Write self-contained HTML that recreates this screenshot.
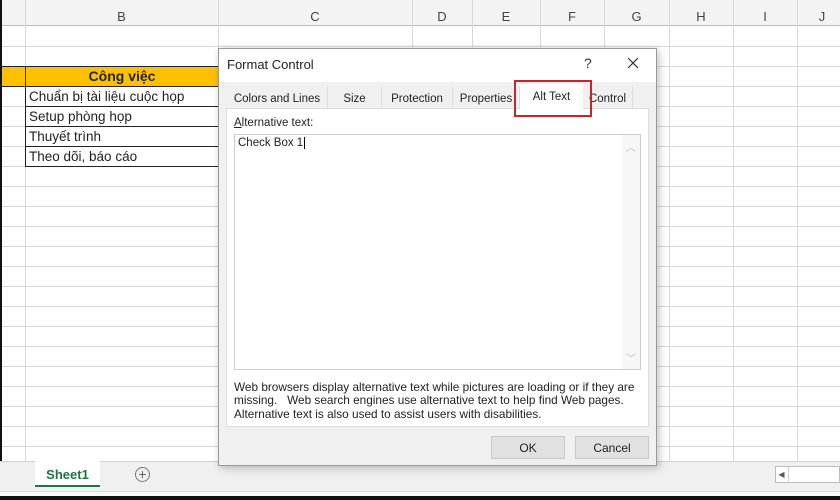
<!DOCTYPE html>
<html><head><meta charset="utf-8"><style>
*{margin:0;padding:0;box-sizing:border-box}
body{width:840px;height:500px;overflow:hidden;background:#fff;font-family:"Liberation Sans",sans-serif;position:relative}
.a{position:absolute}
.hl{position:absolute;left:0;width:840px;height:1px;background:#d8d8d8}
.vl{position:absolute;top:0;width:1px;height:462px;background:#d8d8d8}
.ch{position:absolute;top:0;height:26px;line-height:34px;font-size:13px;color:#444;text-align:center}
.cell{position:absolute;left:25px;width:193px;height:20px;font-size:13.5px;padding-left:3px;line-height:20px;color:#222;border-top:1px solid #222;font-family:"Liberation Sans","Noto Sans CJK SC",sans-serif}
.tab{position:absolute;top:87px;height:21px;font-size:11.5px;color:#222;text-align:center;line-height:24px;background:#f0f0f0;border-right:1px solid #ddd}
.btn{position:absolute;top:436px;height:23px;width:74px;background:#e1e1e1;border:1px solid #c9c9c9;font-size:12px;text-align:center;line-height:22px;color:#222}
</style></head><body>
<div class="a" style="left:0;top:0;width:840px;height:26px;background:#f3f3f3;border-bottom:1px solid #bbb"></div>
<div class="ch" style="left:25px;width:193px">B</div>
<div class="ch" style="left:218px;width:194px">C</div>
<div class="ch" style="left:412px;width:60px">D</div>
<div class="ch" style="left:472px;width:68px">E</div>
<div class="ch" style="left:540px;width:64px">F</div>
<div class="ch" style="left:604px;width:65px">G</div>
<div class="ch" style="left:669px;width:64px">H</div>
<div class="ch" style="left:733px;width:64px">I</div>
<div class="ch" style="left:797px;width:50px">J</div>
<div class="vl" style="left:25px"></div><div class="vl" style="left:218px"></div><div class="vl" style="left:412px"></div><div class="vl" style="left:472px"></div><div class="vl" style="left:540px"></div><div class="vl" style="left:604px"></div><div class="vl" style="left:669px"></div><div class="vl" style="left:733px"></div><div class="vl" style="left:797px"></div>
<div class="hl" style="top:46px"></div><div class="hl" style="top:66px"></div><div class="hl" style="top:86px"></div><div class="hl" style="top:106px"></div><div class="hl" style="top:126px"></div><div class="hl" style="top:146px"></div><div class="hl" style="top:166px"></div><div class="hl" style="top:186px"></div><div class="hl" style="top:206px"></div><div class="hl" style="top:226px"></div><div class="hl" style="top:246px"></div><div class="hl" style="top:266px"></div><div class="hl" style="top:286px"></div><div class="hl" style="top:306px"></div><div class="hl" style="top:326px"></div><div class="hl" style="top:346px"></div><div class="hl" style="top:366px"></div><div class="hl" style="top:386px"></div><div class="hl" style="top:406px"></div><div class="hl" style="top:426px"></div><div class="hl" style="top:446px"></div>
<div class="a" style="left:0;top:66px;width:218px;height:21px;background:#ffc000;border-top:1px solid #222;border-bottom:1px solid #222"></div>
<div class="a" style="left:25px;top:66px;width:193px;height:21px;border-left:1px solid #222;text-align:center;font-weight:bold;font-size:14px;line-height:21px;color:#222">Công việc</div>
<div class="cell" style="top:86px;border-left:1px solid #222">Chuẩn bị tài liệu cuộc họp</div>
<div class="cell" style="top:106px;border-left:1px solid #222">Setup phòng họp</div>
<div class="cell" style="top:126px;border-left:1px solid #222">Thuyết trình</div>
<div class="cell" style="top:146px;border-left:1px solid #222;border-bottom:1px solid #222;height:21px">Theo dõi, báo cáo</div>
<div class="a" style="left:0;top:0;width:2px;height:500px;background:#111"></div>
<div class="a" style="left:0;top:461px;width:840px;height:30px;background:#f0f0f0;border-top:1px solid #d0d0d0"></div>
<div class="a" style="left:35px;top:461px;width:65px;height:26px;background:#fff;border-bottom:2px solid #217346;color:#217346;font-weight:bold;font-size:13px;text-align:center;line-height:28px">Sheet1</div>
<div class="a" style="left:135px;top:467px;width:15px;height:15px;border:1px solid #777;border-radius:50%;color:#666;font-size:14px;line-height:12px;text-align:center">+</div>
<div class="a" style="left:775px;top:466px;width:65px;height:17px;background:#fff;border:1px solid #bbb"></div>
<div class="a" style="left:775px;top:466px;width:14px;height:17px;border-right:1px solid #ccc;font-size:8px;color:#555;text-align:center;line-height:17px">◀</div>
<div class="a" style="left:0;top:491px;width:840px;height:5px;background:#fafafa;border-top:1px solid #ddd"></div>
<div class="a" style="left:0;top:496px;width:840px;height:4px;background:#111"></div>
<div class="a" style="left:218px;top:48px;width:439px;height:418px;background:#f0f0f0;border:1px solid #999;box-shadow:2px 2px 8px rgba(0,0,0,.25)"></div>
<div class="a" style="left:219px;top:49px;width:437px;height:33px;background:#fff"></div>
<div class="a" style="left:227px;top:57px;font-size:13px;color:#222">Format Control</div>
<div class="a" style="left:584px;top:55px;font-size:14px;color:#333">?</div>
<svg class="a" style="left:627px;top:57px" width="12" height="12"><path d="M1 1L11 11M11 1L1 11" stroke="#333" stroke-width="1.2"/></svg>
<div class="tab" style="left:227px;width:101px">Colors and Lines</div>
<div class="tab" style="left:328px;width:54px">Size</div>
<div class="tab" style="left:382px;width:71px">Protection</div>
<div class="tab" style="left:453px;width:67px;overflow:hidden">Properties</div>
<div class="tab" style="left:583px;width:50px">Control</div>
<div class="a" style="left:226px;top:108px;width:423px;height:319px;background:#fff;border:1px solid #ddd"></div>
<div class="a" style="left:520px;top:84px;width:63px;height:26px;background:#fff;font-size:11.5px;text-align:center;line-height:27px;color:#222">Alt Text</div>
<div class="a" style="left:514px;top:80px;width:78px;height:37px;border:2px solid #c0282d"></div>
<div class="a" style="left:234px;top:117px;font-size:11.5px;color:#222"><u>A</u>lternative text:</div>
<div class="a" style="left:234px;top:134px;width:407px;height:236px;border:1px solid #ccc;background:#fff"></div>
<div class="a" style="left:622px;top:135px;width:18px;height:234px;background:#f7f7f7"></div>
<div class="a" style="left:626px;top:139px;font-size:10px;color:#bbb">︿</div>
<div class="a" style="left:626px;top:350px;font-size:10px;color:#bbb">﹀</div>
<div class="a" style="left:238px;top:137px;font-size:11.5px;color:#222">Check Box 1<span style="border-left:1px solid #000;margin-left:1px"></span></div>
<div class="a" style="left:234px;top:381px;width:412px;font-size:11.8px;line-height:13.3px;color:#222">Web browsers display alternative text while pictures are loading or if they are missing.&nbsp;&nbsp; Web search engines use alternative text to help find Web pages. Alternative text is also used to assist users with disabilities.</div>
<div class="btn" style="left:491px">OK</div>
<div class="btn" style="left:575px">Cancel</div>
</body></html>
